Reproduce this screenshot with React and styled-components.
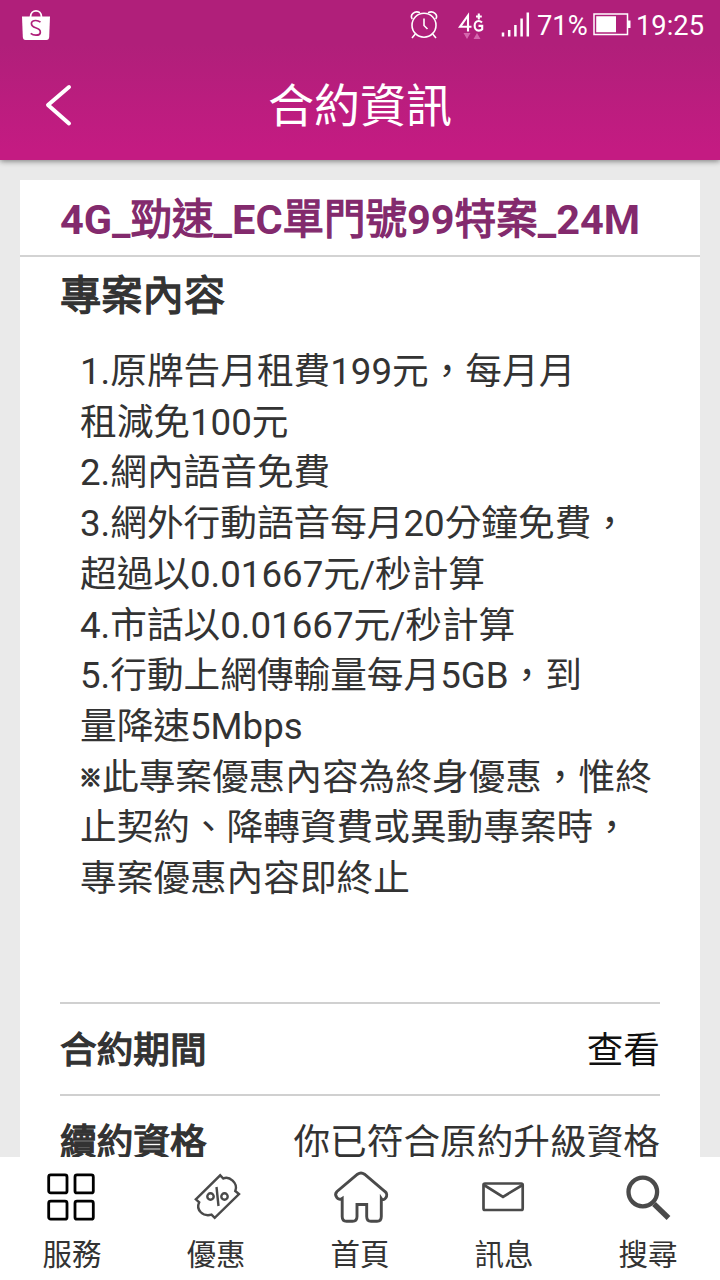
import React from 'react';
import styled, {createGlobalStyle} from 'styled-components';

const GlobalStyle = createGlobalStyle`
  * {
    box-sizing: border-box;
  }
  body {
    margin: 0;
    background: #eaeaea;
    font-family: Roboto, "Noto Sans CJK TC", sans-serif;
    color: #333;
  }
`;

const Page = styled.div`
  display: flex;
  flex-direction: column;
  width: 720px;
  height: 1280px;
  overflow: hidden;
`;

const Header = styled.header`
  position: relative;
  z-index: 1;
  flex: none;
  height: 160px;
  color: #fff;
  background: linear-gradient(#b01f7a 0, #b01f7a 44px, #c41b82 150px);
  box-shadow: 0 1px 6px rgba(0, 0, 0, 0.5);
`;

const StatusBar = styled.div`
  display: flex;
  align-items: center;
  height: 50px;
  padding: 0 16px 0 20px;
  font-size: 27px;
  line-height: 50px;
`;

const StatusIcons = styled.div`
  display: flex;
  align-items: center;
  margin-left: auto;
`;

const StatusText = styled.span`
  width: ${props => props.$width}px;
  padding-top: 1px;
  font-size: 27.3px;
  white-space: nowrap;
`;

const TitleBar = styled.div`
  display: grid;
  grid-template-columns: 120px 1fr 120px;
  align-items: center;
  height: 110px;
`;

const BackButton = styled.button`
  display: flex;
  padding: 0 0 2px 44px;
  border: 0;
  background: none;
  color: inherit;
`;

const Title = styled.h1`
  margin: 0;
  padding-top: 1px;
  font-size: 46px;
  font-weight: 400;
  line-height: 110px;
  text-align: center;
`;

const Content = styled.main`
  flex: 1;
  min-height: 0;
  padding: 20px 20px 0;
  overflow: hidden;
`;

const Card = styled.section`
  height: 1100px;
  background: #fff;
`;

const PlanName = styled.h2`
  height: 77px;
  margin: 0;
  padding-left: 40px;
  border-bottom: 2px solid #d3d3d3;
  color: #832a6d;
  font-size: 41.5px;
  font-weight: 700;
  line-height: 79px;
  white-space: nowrap;
`;

// regular CJK glyphs thickened with a stroke, lighter than the real bold cut
const Strong = styled.span`
  font-weight: 400;
  -webkit-text-stroke: 1.3px currentColor;
`;

const CardBody = styled.div`
  padding: 0 40px;
`;

const SectionTitle = styled.h3`
  height: 78px;
  margin: 0;
  font-size: 41.3px;
  line-height: 79px;
`;

const Terms = styled.div`
  height: 667px;
  padding: 12px 0 0 20px;
  font-size: 36.67px;
  line-height: 50.7px;
  white-space: nowrap;
`;

const Mark = styled.span`
  display: inline-block;
  width: 22px;
  font-size: 23px;
  line-height: 1;
  vertical-align: 4px;
  text-indent: -1px;
  -webkit-text-stroke: 1.3px currentColor;
`;

const InfoRow = styled.div`
  display: flex;
  justify-content: space-between;
  height: 91.5px;
  border-top: 2px solid #d0d0d0;
  font-size: 36.67px;
  line-height: 93px;
`;

const Value = styled.span`
  color: ${props => props.$link ? '#111' : '#333'};
`;

const TabBar = styled.nav`
  display: grid;
  grid-template-columns: repeat(5, 1fr);
  flex: none;
  height: 123px;
  background: #fff;
`;

const Tab = styled.div`
  display: flex;
  flex-direction: column;
  align-items: center;
  padding-top: 10px;
  font-size: 29.5px;
  line-height: 40px;
`;

const TabIcon = styled.svg`
  flex: none;
  width: 60px;
  height: 60px;
  margin-bottom: 8px;
  overflow: visible;
  fill: none;
  stroke: ${props => props.$active ? '#000' : '#4a4a4a'};
  stroke-width: 2.9;
`;

const BagIcon = () => (
  <svg width="32" height="32" viewBox="0 0 32 32" fill="none">
    <path d="M10.500 8C10.500 -.2 21.500 -.2 21.500 8" stroke="#fff" strokeWidth="1.800" />
    <path d="M2 7.500H30L29.200 28Q29 31 26.500 31H5.500Q3 31 2.800 28Z" fill="#fff" />
    <path d="M20.500 13.200Q18.300 11.500 15.800 11.500C9.800 11.500 10.200 17.200 15.600 18.700C22.200 20.500 21.500 26.200 16 26.200Q12.800 26.200 10.700 24.300" stroke="#b01f7a" strokeWidth="1.700" />
  </svg>
);

const AlarmIcon = () => (
  <svg width="30" height="32" viewBox="0 0 30 32" fill="none" stroke="#fff" strokeWidth="1.600">
    <circle cx="15" cy="16.200" r="12" />
    <path d="M15 9.500V16.500L18.500 20M6.300 25L3 29M23.700 25L27 29" />
    <path d="M3.300 10C.5 6 5.500 1 11 3.700M26.700 10C29.500 6 24.500 1 19 3.700" />
  </svg>
);

const NetworkIcon = () => (
  <svg width="28" height="32" viewBox="0 0 28 32" fill="none" stroke="#fff" strokeWidth="2.100">
    <path d="M10 22.500V6.500L2 17.800H13.500" />
    <path d="M24 13.500Q22.500 12 20.700 12C15.300 12 15.300 21.600 20.700 21.600Q23 21.600 24.200 20.200V16.900H20.500" />
    <path d="M20.800 4.500V10.500M18 7.500H23.800" />
    <path d="M5.500 24H12.500L9 30ZM15.500 30H22.500L19 24Z" fill="#d467ad" stroke="none" />
  </svg>
);

const SignalIcon = () => (
  <svg width="29" height="26" viewBox="0 0 29 26" stroke="#fff" strokeWidth="2.500">
    <path d="M2 20.500V24.500M8.200 18V24.500M14.400 13V24.500M20.600 6.500V24.500M26.800 .5V24.500" />
  </svg>
);

const BatteryIcon = () => (
  <svg width="38" height="24" viewBox="0 0 38 24" fill="none">
    <path d="M1 1H34.500V21.500H1Z" stroke="#fff" strokeWidth="1.500" />
    <path d="M3.200 3.200H23V19.300H3.200ZM35 7.500H37.500V15H35Z" fill="#fff" />
  </svg>
);

const StatusSlot = styled.span`
  display: flex;
  margin: ${props => props.$margin};
`;

const tabs = [
  {
    label: '服務',
    active: true,
    icon: (
      <g strokeWidth="2.800">
        <rect x="6.700" y="7.900" width="18.300" height="18" rx="2" />
        <rect x="33" y="7.900" width="18.300" height="18" rx="2" />
        <rect x="6.700" y="34.200" width="18.300" height="18" rx="2" />
        <rect x="33" y="34.200" width="18.300" height="18" rx="2" />
      </g>
    ),
  },
  {
    label: '優惠',
    icon: (
      <g strokeWidth="2.400">
        <path d="M9.800 32.300L34.200 8.300L37.300 11.500C43 8.500 52.500 16 49.300 24L53 27L28.700 50.800L25.500 47.700C17 50 9.500 43 13.200 35.300Z" />
        <circle cx="24.500" cy="29.500" r="3.200" />
        <circle cx="38.500" cy="29.500" r="3.200" />
        <path d="M30.500 20L32.500 39" />
      </g>
    ),
  },
  {
    label: '首頁',
    icon: (
      <path d="M27.500 7.200Q31 4.700 34.500 7.200L55 24.500C59.500 28 54 35.500 51.300 31.500V49.500Q51.300 54.300 47 54.300H41Q36.700 54.300 36.700 49.500V37.500H27V49.500Q27 54.300 22.500 54.300H16.500Q12.200 54.300 12.200 49.500V31.500C8 34.500 3.500 28 7 24.500Z" />
    ),
  },
  {
    label: '訊息',
    icon: (
      <g strokeWidth="2.700">
        <rect x="9.500" y="16.500" width="39.200" height="26.500" rx="1.500" />
        <path d="M10 18L29 29.800L48.500 18" />
      </g>
    ),
  },
  {
    label: '搜尋',
    icon: (
      <g strokeWidth="4.300">
        <circle cx="24.800" cy="25" r="14.300" />
        <path d="M36 37L50.500 51" strokeWidth="5.400" />
      </g>
    ),
  },
];

const terms = [
  '1.原牌告月租費199元，每月月',
  '租減免100元',
  '2.網內語音免費',
  '3.網外行動語音每月20分鐘免費，',
  '超過以0.01667元/秒計算',
  '4.市話以0.01667元/秒計算',
  '5.行動上網傳輸量每月5GB，到',
  '量降速5Mbps',
];

const App = () => (
  <Page lang="zh-Hant">
    <GlobalStyle />
    <Header>
      <StatusBar>
        <BagIcon />
        <StatusIcons>
          <StatusSlot $margin="0 19px 0 0"><AlarmIcon /></StatusSlot>
          <StatusSlot $margin="0 15px 0 0"><NetworkIcon /></StatusSlot>
          <StatusSlot $margin="0 7px 0 0"><SignalIcon /></StatusSlot>
          <StatusText $width={56}>71%</StatusText>
          <StatusSlot $margin="0 5px 0 0"><BatteryIcon /></StatusSlot>
          <StatusText $width={68}>19:25</StatusText>
        </StatusIcons>
      </StatusBar>
      <TitleBar>
        <BackButton aria-label="返回">
          <svg width="28" height="44" viewBox="0 0 28 44" fill="none" stroke="#fff" strokeWidth="4" strokeLinecap="round" strokeLinejoin="round">
            <path d="M25 4L4 22L25 40.500" />
          </svg>
        </BackButton>
        <Title>合約資訊</Title>
      </TitleBar>
    </Header>
    <Content>
      <Card>
        <PlanName>
          4G_<Strong>勁速</Strong>_EC<Strong>單門號</Strong>99<Strong>特案</Strong>_24M
        </PlanName>
        <CardBody>
          <SectionTitle><Strong>專案內容</Strong></SectionTitle>
          <Terms>
            {terms.map(line => <div key={line}>{line}</div>)}
            <div><Mark>※</Mark>此專案優惠內容為終身優惠，惟終</div>
            <div>止契約、降轉資費或異動專案時，</div>
            <div>專案優惠內容即終止</div>
          </Terms>
          <InfoRow>
            <Strong>合約期間</Strong>
            <Value $link>查看</Value>
          </InfoRow>
          <InfoRow>
            <Strong>續約資格</Strong>
            <Value>你已符合原約升級資格</Value>
          </InfoRow>
        </CardBody>
      </Card>
    </Content>
    <TabBar>
      {tabs.map(tab => (
        <Tab key={tab.label}>
          <TabIcon viewBox="0 0 60 60" $active={tab.active}>{tab.icon}</TabIcon>
          <span>{tab.label}</span>
        </Tab>
      ))}
    </TabBar>
  </Page>
);

export default App;
